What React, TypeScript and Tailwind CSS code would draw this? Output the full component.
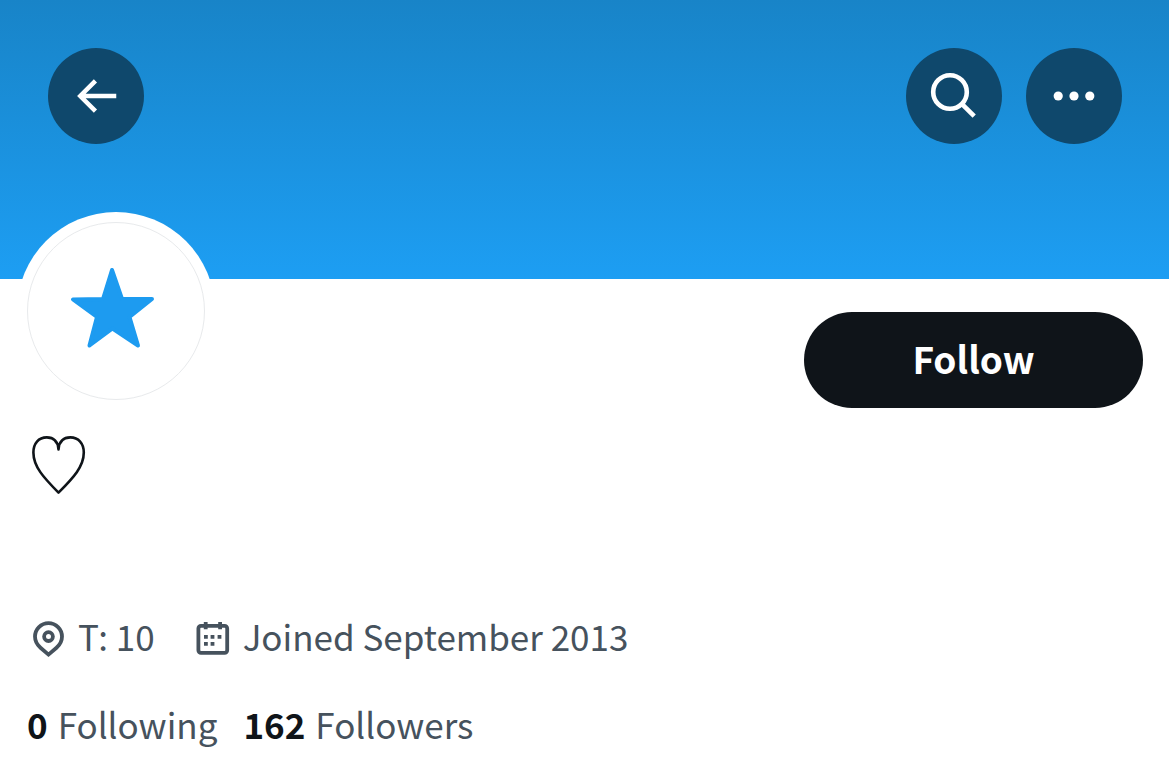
import type { ReactNode } from "react";

const BackIcon = () => (
  <svg className="size-[54px]" viewBox="0 0 24 24" fill="currentColor" aria-hidden="true">
    <path d="M7.414 13l5.043 5.04-1.414 1.42L3.586 12l7.457-7.46 1.414 1.42L7.414 11H21v2H7.414z" />
  </svg>
);

const SearchIcon = () => (
  <svg className="size-12" viewBox="0 0 48 48" fill="none" stroke="currentColor" strokeWidth="4.6" aria-hidden="true">
    <circle cx="20" cy="20" r="16.8" />
    <path d="M31.8 31.8L44.2 44.2" />
  </svg>
);

const MoreIcon = () => (
  <svg className="size-12" viewBox="0 0 48 48" fill="currentColor" aria-hidden="true">
    <circle cx="8.2" cy="24" r="4.6" />
    <circle cx="24" cy="24" r="4.6" />
    <circle cx="39.8" cy="24" r="4.6" />
  </svg>
);

const PinIcon = () => (
  <svg className="h-10 w-9" viewBox="0 0 36 40" fill="none" stroke="currentColor" strokeWidth="3.8" aria-hidden="true">
    <path d="M18.5 34.6L10.5 27.8Q5 23 5 16.6A13.5 13.5 0 0 1 32 16.6Q32 23 26.5 27.8Z" />
    <circle cx="18.5" cy="16.6" r="4.4" />
  </svg>
);

const CalendarIcon = () => (
  <svg className="h-10 w-9" viewBox="0 0 36 40" fill="none" stroke="currentColor" strokeWidth="3.8" aria-hidden="true">
    <rect x="3.4" y="5.8" width="28.8" height="27" rx="2.6" />
    <path d="M10.7 2V9.2M25.1 2V9.2" />
    <path d="M9 16.8h3.8M15.6 16.8h3.8M22.6 16.8h3.8M9 23.8h3.8M15.6 23.8h3.8" />
  </svg>
);

// Round button on top of the banner
const BannerButton = ({ label, children }: { label: string; children: ReactNode }) => (
  <button
    type="button"
    aria-label={label}
    className="flex size-24 items-center justify-center rounded-full bg-[#0f486c] text-white"
  >
    {children}
  </button>
);

const Stat = ({ value, label }: { value: number; label: string }) => (
  <a href="#" className="flex gap-2.5">
    <span className="font-bold text-[#0f1419]">{value}</span>
    <span>{label}</span>
  </a>
);

const stats = [
  { value: 0, label: "Following" },
  { value: 162, label: "Followers" },
];

const App = () => {
  return (
    <div className="min-h-screen bg-white font-['Noto_Sans_CJK_SC',sans-serif] text-[35px] leading-[48px] text-[#46525d]">
      <header className="flex h-[279px] items-start justify-between bg-linear-to-b from-[#1884c8] to-[#1d9ef3] pt-12 pr-[47px] pl-12">
        <BannerButton label="Back">
          <BackIcon />
        </BannerButton>
        <div className="flex gap-6">
          <BannerButton label="Search">
            <SearchIcon />
          </BannerButton>
          <BannerButton label="More">
            <MoreIcon />
          </BannerButton>
        </div>
      </header>

      <main>
        <div className="relative -mt-[67px] flex items-end justify-between pr-[26px] pl-[17px]">
          <div className="rounded-full bg-white p-[10px]">
            <div className="size-[178px] rounded-full border border-[#e8eaec]">
              <svg viewBox="0 0 176 176" role="img" aria-label="Star avatar">
                <path
                  d="M84 47L94 76L124 76L101.5 94L110 122.5L84.5 105.5L61.5 122.5L69 94L45 76.5L75 76Z"
                  fill="#1d9bf0"
                  stroke="#1d9bf0"
                  strokeWidth="4"
                  strokeLinejoin="round"
                />
              </svg>
            </div>
          </div>
          <button
            type="button"
            className="mb-0.5 h-24 w-[339px] rounded-full bg-[#0f1419] pb-1 text-[37px] font-bold text-white"
          >
            Follow
          </button>
        </div>

        <section className="px-[27px]">
          <h1 className="pt-6 pl-px">
            <svg className="h-16 w-[60px]" viewBox="0 0 60 64" role="img" aria-label="Heart">
              <path
                d="M30.5 15.5C30.2 7.5 25.5 3.4 18.8 3.4C10.5 3.4 5.4 9.5 5.4 18.5C5.4 32.5 15.5 43.5 30.5 58.6C45.5 43.5 55.8 32.5 55.8 18.5C55.8 9.5 50.5 3.4 42.3 3.4C35.5 3.4 30.8 7.5 30.5 15.5Z"
                fill="none"
                stroke="#0f1419"
                strokeWidth="2.6"
                strokeLinejoin="round"
              />
            </svg>
          </h1>

          <div className="flex flex-wrap gap-x-10 pt-[114px] pl-[3px]">
            <p className="flex items-end gap-3">
              <PinIcon />
              <span>T: 10</span>
            </p>
            <p className="flex items-end gap-3">
              <CalendarIcon />
              <span>Joined September 2013</span>
            </p>
          </div>

          <div className="flex flex-wrap gap-x-[26px] pt-10">
            {stats.map((item) => (
              <Stat key={item.label} {...item} />
            ))}
          </div>
        </section>
      </main>
    </div>
  );
};

export default App;
